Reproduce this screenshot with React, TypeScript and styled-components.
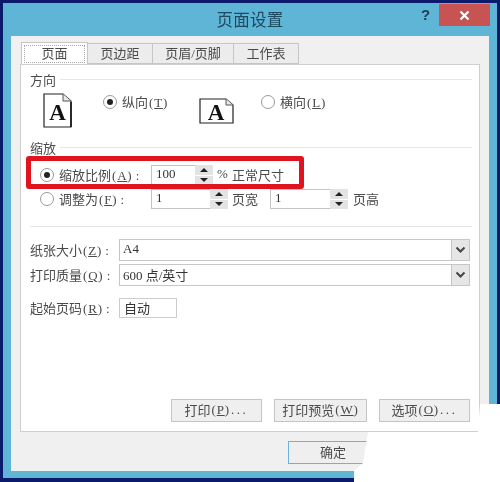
import React from "react";
import styled, { createGlobalStyle } from "styled-components";

const Global = createGlobalStyle`
  html, body { margin: 0; padding: 0; background: #fff; }
  body { width: 500px; height: 482px; overflow: hidden; }
  #root { width: 500px; height: 482px; }
  * { box-sizing: border-box; }
`;

const font = `"Liberation Serif", "Noto Sans CJK SC", sans-serif`;

const Frame = styled.div`
  position: relative;
  width: 500px;
  height: 482px;
  padding: 3px 3px 4px 3px;
  background: #0b1a6b;
  font-family: ${font};
  font-size: 13px;
  letter-spacing: 0;
  color: #4a4a4a;
  overflow: hidden;
  filter: blur(0.35px);
`;
const Win = styled.div`
  height: 100%;
  background: #5fb5d5;
  display: flex;
  flex-direction: column;
  padding: 0 8px 7px 8px;
`;
const TitleBar = styled.div`
  position: relative;
  height: 33px;
  flex: none;
  display: flex;
  align-items: center;
  justify-content: center;
`;
const Title = styled.div`
  font-family: "Noto Sans CJK SC", sans-serif;
  font-size: 16.5px;
  letter-spacing: 0.3px;
  color: #1d4a60;
  padding-bottom: 1px;
`;
const Help = styled.div`
  position: absolute;
  left: 410px;
  top: 3px;
  font-family: "Liberation Sans", sans-serif;
  font-weight: 700;
  font-size: 15px;
  color: #1d3f55;
`;
const Close = styled.div`
  position: absolute;
  left: 428px;
  top: 1px;
  width: 51px;
  height: 22px;
  background: #c85353;
  display: flex;
  align-items: center;
  justify-content: center;
`;
const Body = styled.div`
  flex: 1;
  background: #f0f0f0;
  display: flex;
  flex-direction: column;
  padding: 7px 9px 0 9px;
`;
const TabBar = styled.div`
  display: flex;
  height: 21px;
  padding-left: 1px;
`;
const Tab = styled.div<{ $active?: boolean; $w: number }>`
  width: ${(p) => p.$w}px;
  height: ${(p) => (p.$active ? 22 : 21)}px;
  margin-top: ${(p) => (p.$active ? -1 : 0)}px;
  position: relative;
  z-index: ${(p) => (p.$active ? 2 : 0)};
  background: ${(p) => (p.$active ? "#fff" : "#ececec")};
  border: 1px solid #c6c6c6;
  border-bottom: ${(p) => (p.$active ? "none" : "1px solid #c6c6c6")};
  border-left: ${(p) => (p.$active ? "1px solid #c6c6c6" : "none")};
  display: flex;
  align-items: center;
  justify-content: center;
  padding-bottom: 2px;
`;
const TabFocus = styled.div`
  position: absolute;
  inset: 2px 2px 1px 2px;
  border: 1px dotted #a8a8a8;
`;
const Panel = styled.div`
  position: relative;
  height: 368px;
  flex: none;
  width: 460px;
  background: #fff;
  border: 1px solid #cfcfcf;
  padding: 6px 7px 0 9px;
  display: flex;
  flex-direction: column;
`;
const Heading = styled.div<{ $top?: number }>`
  display: flex;
  align-items: center;
  gap: 4px;
  height: 16px;
  margin-top: ${(p) => p.$top ?? 0}px;
  &::after { content: ""; flex: 1; height: 1px; background: #e6e6e6; }
`;
const Orientation = styled.div`
  display: grid;
  grid-template-columns: 60px 96px 62px 1fr;
  align-items: start;
  padding-left: 13px;
  margin-top: 6px;
  height: 35px;
`;
const IconSlot = styled.div<{ $top: number }>`
  margin-top: ${(p) => p.$top}px;
  line-height: 0;
`;
const RadioLabel = styled.label<{ $w?: number }>`
  display: flex;
  align-items: center;
  gap: 5px;
  height: 18px;
  flex: none;
  width: ${(p) => (p.$w ? `${p.$w}px` : "auto")};
`;
const Text = styled.span`
  padding-bottom: 2px;
  white-space: pre;
`;
const Dot = styled.span<{ $on?: boolean }>`
  width: 14px;
  height: 14px;
  flex: none;
  border-radius: 50%;
  border: 1px solid #9a9a9a;
  background: #fff;
  display: flex;
  align-items: center;
  justify-content: center;
  &::after {
    content: "";
    width: 6px;
    height: 6px;
    border-radius: 50%;
    background: ${(p) => (p.$on ? "#222" : "transparent")};
  }
`;
const KeyWrap = styled.span`
  letter-spacing: 0.8px;
  margin-left: 1px;
`;
const KeyLetter = styled.span`
  text-decoration: underline;
  text-underline-offset: 1px;
`;
const Key = ({ k }: { k: string }) => (
  <KeyWrap>(<KeyLetter>{k}</KeyLetter>)</KeyWrap>
);
const ScaleRow = styled.div<{ $top: number }>`
  display: flex;
  align-items: center;
  height: 20px;
  padding-left: 10px;
  margin-top: ${(p) => p.$top}px;
`;
const Stepper = styled.div<{ $w: number }>`
  width: ${(p) => p.$w}px;
  height: 20px;
  flex: none;
  display: flex;
  border: 1px solid #c4c4c4;
  background: #fff;
  color: #333;
`;
const StepValue = styled.div`
  flex: 1;
  padding: 0 0 2px 4px;
  display: flex;
  align-items: center;
`;
const Spin = styled.div`
  width: 18px;
  flex: none;
  display: flex;
  flex-direction: column;
  gap: 1px;
  margin: -1px -1px -1px 0;
  background: #fff;
`;
const SpinPart = styled.div`
  flex: 1;
  background: #e3e3e3;
  display: flex;
  align-items: center;
  justify-content: center;
`;
const Tri = styled.span<{ $down?: boolean }>`
  width: 0;
  height: 0;
  border-left: 4px solid transparent;
  border-right: 4px solid transparent;
  ${(p) => (p.$down ? "border-top: 4px solid #222;" : "border-bottom: 4px solid #222;")}
`;
const Inline = styled.span<{ $left: number; $w?: number }>`
  margin-left: ${(p) => p.$left}px;
  flex: none;
  padding-bottom: 2px;
  width: ${(p) => (p.$w ? `${p.$w}px` : "auto")};
`;
const Rule = styled.div<{ $top: number }>`
  height: 1px;
  background: #e6e6e6;
  margin-top: ${(p) => p.$top}px;
`;
const FieldRow = styled.div<{ $top: number; $h: number }>`
  display: flex;
  align-items: center;
  height: ${(p) => p.$h}px;
  margin-top: ${(p) => p.$top}px;
`;
const FieldLabel = styled.div`
  width: 89px;
  flex: none;
  padding-bottom: 2px;
  white-space: pre;
`;
const Select = styled.div`
  width: 351px;
  height: 100%;
  flex: none;
  display: flex;
  align-items: center;
  border: 1px solid #c6c6c6;
  background: #fff;
  color: #333;
  padding-left: 3px;
`;
const SelectText = styled.div`
  flex: 1;
  padding-bottom: 2px;
  white-space: pre;
`;
const Arrow = styled.div`
  width: 19px;
  height: calc(100% + 2px);
  margin-right: -1px;
  background: #e6e6e6;
  border: 1px solid #c6c6c6;
  display: flex;
  align-items: center;
  justify-content: center;
`;
const TextField = styled.div`
  width: 58px;
  height: 100%;
  border: 1px solid #cccccc;
  padding: 0 0 2px 4px;
  display: flex;
  align-items: center;
  color: #333;
`;
const Actions = styled.div`
  display: flex;
  margin-top: 81px;
  padding-left: 141px;
  gap: 12px;
`;
const Btn = styled.div<{ $w: number }>`
  width: ${(p) => p.$w}px;
  height: 23px;
  flex: none;
  background: #efefef;
  border: 1px solid #c4c4c4;
  display: flex;
  align-items: center;
  justify-content: center;
  padding-bottom: 2px;
  white-space: pre;
`;
const Dots = styled.span`
  letter-spacing: 2.6px;
  margin-left: 1px;
`;
const Footer = styled.div`
  display: flex;
  padding: 9px 0 0 268px;
`;
const OkBtn = styled.div`
  width: 90px;
  height: 23px;
  background: #efefef;
  border: 1px solid #6db2dc;
  display: flex;
  align-items: center;
  justify-content: center;
  padding-bottom: 2px;
`;
const Highlight = styled.div`
  position: absolute;
  left: 5px;
  top: 91px;
  width: 278px;
  height: 33px;
  border: 5px solid #e0141f;
  border-radius: 3px;
  pointer-events: none;
`;
const Erased = styled.div`
  position: absolute;
  inset: 0;
  background: #fff;
  clip-path: polygon(500px 404px, 480px 404px, 478px 432px, 368px 432px, 363px 463px, 354px 471px, 354px 482px, 500px 482px);
`;

const Portrait = () => (
  <svg width="29" height="35" viewBox="0 0 29 35">
    <path d="M1 1H20L28 8V34H1Z" fill="#fff" stroke="#222" strokeWidth="1.2" />
    <path d="M20 1V8H28" fill="#e8e8e8" stroke="#555" strokeWidth="1" />
    <path d="M28 9V34" stroke="#111" strokeWidth="1.5" />
    <text x="14.5" y="27" textAnchor="middle" fontFamily="Liberation Serif" fontWeight="700" fontSize="23" fill="#111">A</text>
  </svg>
);
const Landscape = () => (
  <svg width="35" height="26" viewBox="0 0 35 26">
    <path d="M1 1H27L34 7V25H1Z" fill="#fff" stroke="#222" strokeWidth="1.2" />
    <path d="M27 1V7H34" fill="#e8e8e8" stroke="#555" strokeWidth="1" />
    <text x="17" y="22" textAnchor="middle" fontFamily="Liberation Serif" fontWeight="700" fontSize="23" fill="#111">A</text>
  </svg>
);
const Chevron = () => (
  <svg width="11" height="8" viewBox="0 0 11 8">
    <path d="M1.5 1.5L5.5 5.5L9.5 1.5" fill="none" stroke="#444" strokeWidth="2" />
  </svg>
);
const Cross = () => (
  <svg width="11" height="11" viewBox="0 0 11 11">
    <path d="M1.5 1.5L9.5 9.5M9.5 1.5L1.5 9.5" stroke="#fff" strokeWidth="2.2" />
  </svg>
);
const StepButtons = () => (
  <Spin>
    <SpinPart><Tri /></SpinPart>
    <SpinPart><Tri $down /></SpinPart>
  </Spin>
);

export default function App() {
  return (
    <Frame>
      <Global />
      <Win>
        <TitleBar>
          <Title>页面设置</Title>
          <Help>?</Help>
          <Close><Cross /></Close>
        </TitleBar>
        <Body>
          <TabBar>
            <Tab $active $w={67}><TabFocus />页面</Tab>
            <Tab $w={65}>页边距</Tab>
            <Tab $w={81}>页眉/页脚</Tab>
            <Tab $w={65}>工作表</Tab>
          </TabBar>
          <Panel>
            <Heading>方向</Heading>
            <Orientation>
              <IconSlot $top={0}><Portrait /></IconSlot>
              <RadioLabel>
                <Dot $on />
                <Text>纵向<Key k="T" /></Text>
              </RadioLabel>
              <IconSlot $top={5}><Landscape /></IconSlot>
              <RadioLabel>
                <Dot />
                <Text>横向<Key k="L" /></Text>
              </RadioLabel>
            </Orientation>
            <Heading $top={11}>缩放</Heading>
            <ScaleRow $top={10}>
              <RadioLabel $w={111}>
                <Dot $on />
                <Text>缩放比例<Key k="A" /> :</Text>
              </RadioLabel>
              <Stepper $w={62}>
                <StepValue>100</StepValue>
                <StepButtons />
              </Stepper>
              <Inline $left={4} $w={15}>%</Inline>
              <Inline $left={0}>正常尺寸</Inline>
            </ScaleRow>
            <ScaleRow $top={4}>
              <RadioLabel $w={111}>
                <Dot />
                <Text>调整为<Key k="F" /> :</Text>
              </RadioLabel>
              <Stepper $w={77}>
                <StepValue>1</StepValue>
                <StepButtons />
              </Stepper>
              <Inline $left={4} $w={38}>页宽</Inline>
              <Stepper $w={78}>
                <StepValue>1</StepValue>
                <StepButtons />
              </Stepper>
              <Inline $left={5}>页高</Inline>
            </ScaleRow>
            <Rule $top={17} />
            <FieldRow $top={12} $h={22}>
              <FieldLabel>纸张大小<Key k="Z" /> :</FieldLabel>
              <Select>
                <SelectText>A4</SelectText>
                <Arrow><Chevron /></Arrow>
              </Select>
            </FieldRow>
            <FieldRow $top={3} $h={22}>
              <FieldLabel>打印质量<Key k="Q" /> :</FieldLabel>
              <Select>
                <SelectText>600 点/英寸</SelectText>
                <Arrow><Chevron /></Arrow>
              </Select>
            </FieldRow>
            <FieldRow $top={12} $h={20}>
              <FieldLabel>起始页码<Key k="R" /> :</FieldLabel>
              <TextField>自动</TextField>
            </FieldRow>
            <Actions>
              <Btn $w={91}>打印<Key k="P" /><Dots>...</Dots></Btn>
              <Btn $w={93}>打印预览<Key k="W" /></Btn>
              <Btn $w={91}>选项<Key k="O" /><Dots>...</Dots></Btn>
            </Actions>
            <Highlight />
          </Panel>
          <Footer>
            <OkBtn>确定</OkBtn>
          </Footer>
        </Body>
      </Win>
      <Erased />
    </Frame>
  );
}
